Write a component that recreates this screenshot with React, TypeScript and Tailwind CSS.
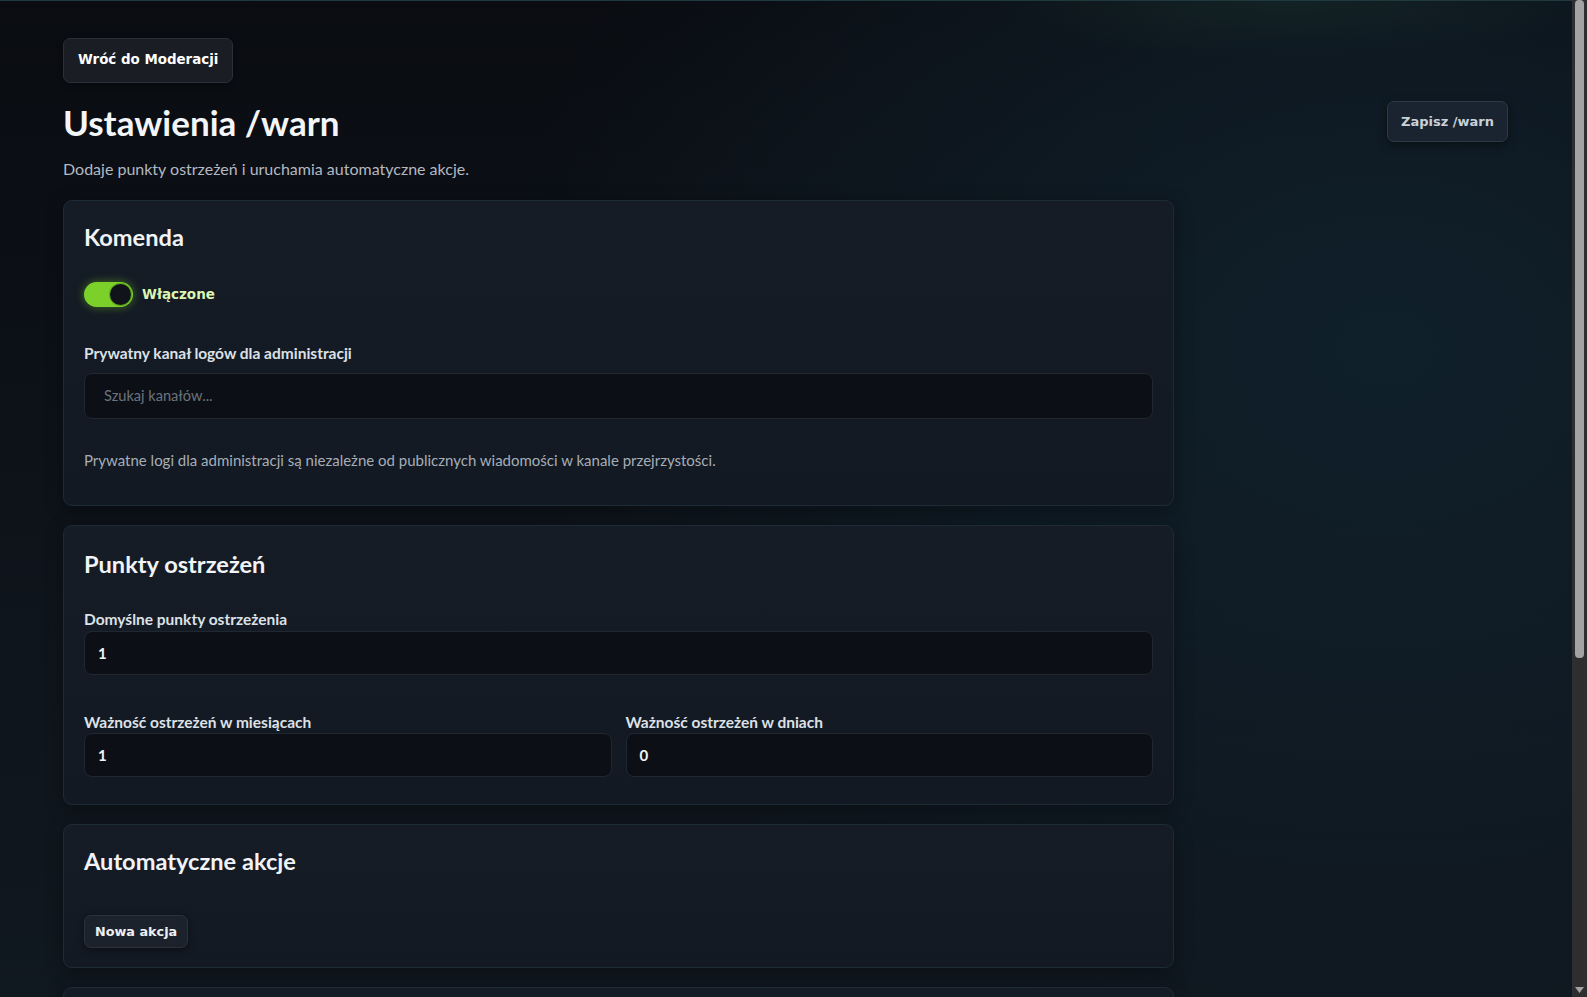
import React from "react";

const body = "font-['Lato','Noto_Sans',sans-serif]";
const btnFont = "font-['DejaVu_Sans','Verdana',sans-serif]";

function Card({ children, className = "" }: { children?: React.ReactNode; className?: string }) {
  return (
    <section
      className={`w-[1111px] rounded-[9px] border border-[#1c2b36] bg-[linear-gradient(180deg,#151c26_0%,#121922_100%)] shadow-[0_4px_18px_rgba(0,0,0,0.35)] px-5 pt-5 ${className}`}
    >
      {children}
    </section>
  );
}

function Field({ value }: { value: string }) {
  return (
    <div className="h-[44px] w-full rounded-[8px] border border-[#1f2731] bg-[#0c1016] px-[13px] flex items-center">
      <span className="text-[15px] font-bold text-[#f1f3f5]">{value}</span>
    </div>
  );
}

function Label({ children, className = "" }: { children: React.ReactNode; className?: string }) {
  return (
    <label className={`block text-[15.5px] leading-[20px] font-bold text-[#dde1e6] ${className}`}>{children}</label>
  );
}

export default function App() {
  return (
    <div className={`h-screen flex overflow-hidden ${body} text-white`}>
      <main
        className="flex-1 overflow-hidden bg-[#0c1017] bg-[radial-gradient(ellipse_900px_700px_at_88%_35%,#10202b_0%,rgba(16,32,43,0.6)_45%,rgba(12,16,23,0)_100%),radial-gradient(ellipse_300px_60px_at_82%_0%,rgba(60,110,60,0.25)_0%,rgba(0,0,0,0)_100%),linear-gradient(180deg,#0a0c11_0%,#0e141b_60%,#101820_100%)]"
      >
        <div className="border-t border-[#1e3a3e] pl-[63px] pr-[64px] pt-[37px] pb-10">
          <button
            className={`h-[45px] px-[14px] rounded-[7px] border border-[#2a2f38] bg-[#1a1d24] shadow-[0_2px_6px_rgba(0,0,0,0.4)] ${btnFont} text-[13.4px] font-bold text-white`}
          >
            Wróć do Moderacji
          </button>

          <div className="mt-[18px] flex items-center justify-between">
            <h1 className="text-[35px] leading-[40px] font-bold text-[#f3f5f8]">Ustawienia /warn</h1>
            <button
              className={`h-[41px] w-[121px] rounded-[7px] border border-[#2c3a48] bg-[#1a2430] shadow-[0_3px_10px_rgba(0,0,0,0.45)] ${btnFont} text-[13px] font-bold text-[#c9d1d9]`}
            >
              Zapisz /warn
            </button>
          </div>

          <p className="mt-[15px] text-[16px] leading-[24px] text-[#b3b9c2]">
            Dodaje punkty ostrzeżeń i uruchamia automatyczne akcje.
          </p>

          <div className="mt-[19px] flex flex-col gap-[19px]">
            <Card className="pb-[35px]">
              <h2 className="text-[23.6px] leading-[32px] font-bold text-[#f1f3f6]">Komenda</h2>
              <div className="mt-[28px] h-[26px] flex items-center gap-[9px]">
                <div className="relative h-[25px] w-[49px] rounded-full bg-[#7bd12a] shadow-[0_0_10px_rgba(132,214,40,0.45)]">
                  <div className="absolute right-[2px] top-[2px] h-[21px] w-[21px] rounded-full bg-[#10141a] ring-1 ring-[#5da51c]" />
                </div>
                <span className={`${btnFont} text-[13.5px] font-bold text-[#dcf5b2]`}>Włączone</span>
              </div>
              <Label className="mt-[36px]">Prywatny kanał logów dla administracji</Label>
              <div className="mt-[10px] h-[46px] w-full rounded-[8px] border border-[#1f2731] bg-[#0c1016] px-[19px] flex items-center">
                <span className="text-[14.6px] text-[#6b737e]">Szukaj kanałów...</span>
              </div>
              <p className="mt-[31px] text-[15px] leading-[20px] text-[#a6adb7]">
                Prywatne logi dla administracji są niezależne od publicznych wiadomości w kanale przejrzystości.
              </p>
            </Card>

            <Card className="pb-[27px]">
              <h2 className="mt-[2px] text-[23.6px] leading-[32px] font-bold text-[#f1f3f6]">Punkty ostrzeżeń</h2>
              <Label className="mt-[29px]">Domyślne punkty ostrzeżenia</Label>
              <div className="mt-[2px]">
                <Field value="1" />
              </div>
              <div className="mt-[37px] grid grid-cols-2 gap-[14px]">
                <div>
                  <Label>Ważność ostrzeżeń w miesiącach</Label>
                  <div className="mt-[1px]">
                    <Field value="1" />
                  </div>
                </div>
                <div>
                  <Label>Ważność ostrzeżeń w dniach</Label>
                  <div className="mt-[1px]">
                    <Field value="0" />
                  </div>
                </div>
              </div>
            </Card>

            <Card className="pb-[19px]">
              <h2 className="text-[23.6px] leading-[32px] font-bold text-[#f1f3f6]">Automatyczne akcje</h2>
              <button
                className={`mt-[38px] h-[33px] px-[10px] rounded-[7px] border border-[#2b323c] bg-[#1b222c] shadow-[0_2px_6px_rgba(0,0,0,0.4)] ${btnFont} text-[12.8px] font-bold text-[#eef0f3]`}
              >
                Nowa akcja
              </button>
            </Card>

            <Card className="h-[300px]" />
          </div>
        </div>
      </main>

      <aside className="w-[15px] shrink-0 bg-[#2e2e2e] flex flex-col">
        <div className="mx-[3px] mt-0 h-[658px] rounded-[4px] bg-[#a3a3a3]" />
        <div className="flex-1" />
        <div className="h-[15px] flex items-center justify-center">
          <svg width="9" height="6" viewBox="0 0 9 6">
            <path d="M0 0 H9 L4.5 6 Z" fill="#a3a3a3" />
          </svg>
        </div>
      </aside>
    </div>
  );
}
